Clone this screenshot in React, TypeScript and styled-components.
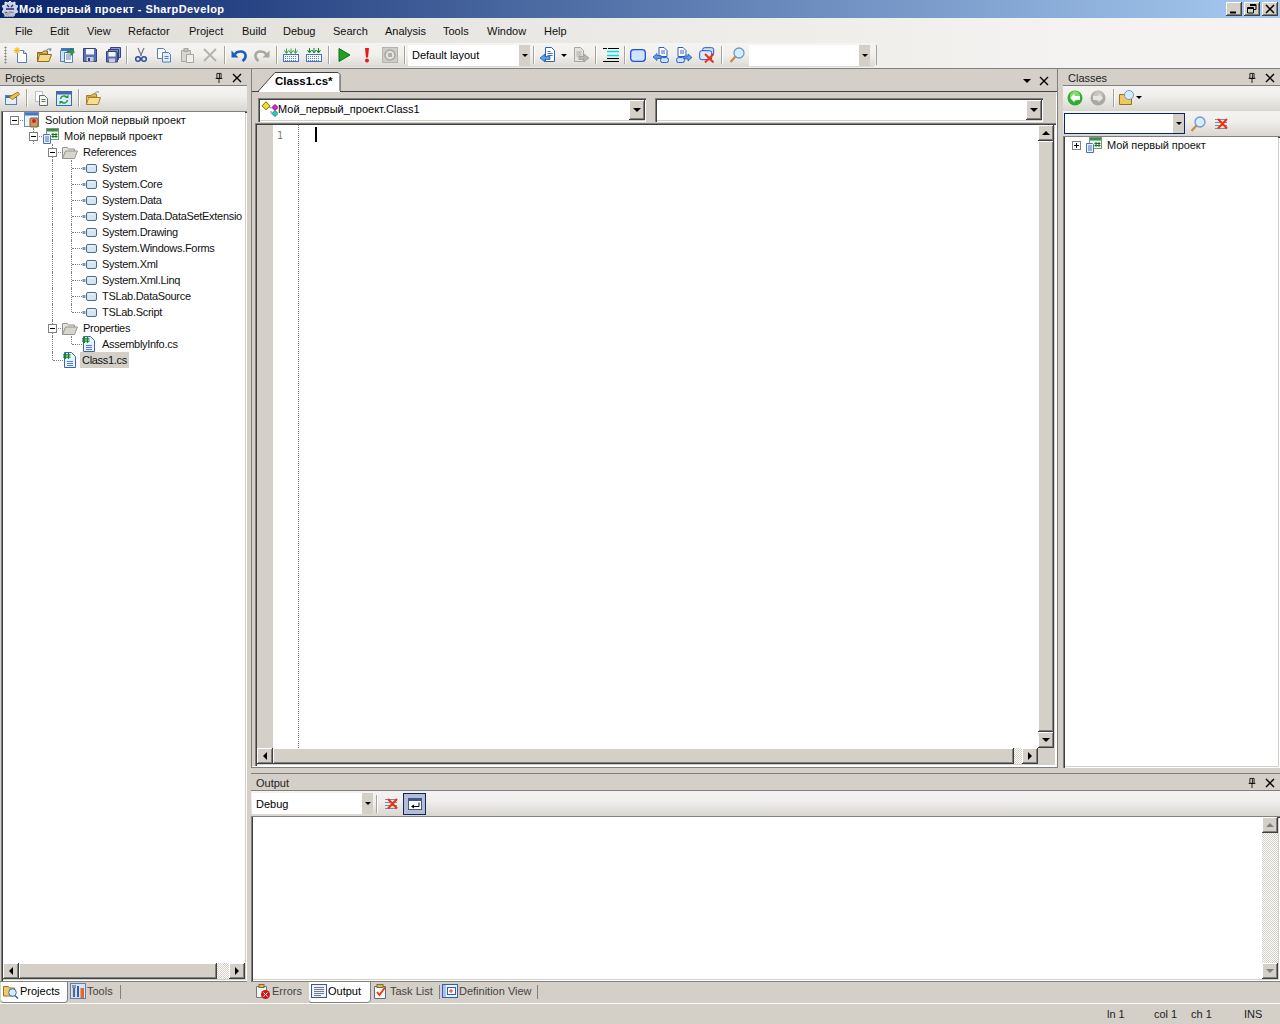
import React from "react";
import styled, { createGlobalStyle } from "styled-components";

const UI_FONT = `"Liberation Sans", Arial, sans-serif`;

const GlobalStyle = createGlobalStyle`
  html, body {
    margin: 0;
    padding: 0;
    background: #d4d0c8;
    overflow: hidden;
  }
  * { box-sizing: border-box; }
  svg { display: block; flex: none; }
`;

const sunken = `
  box-shadow: inset 1px 1px #808080, inset 2px 2px #404040, inset -1px -1px #fff, inset -2px -2px #d4d0c8;
`;
const raised = `
  box-shadow: inset -1px -1px #404040, inset 1px 1px #fff, inset -2px -2px #808080;
`;
const dither = `
  background-color: #fff;
  background-image: conic-gradient(#d4d0c8 25%, transparent 0 50%, #d4d0c8 0 75%, transparent 0);
  background-size: 2px 2px;
`;

const Window = styled.div`
  width: 1280px;
  height: 1024px;
  display: flex;
  flex-direction: column;
  font-family: ${UI_FONT};
  font-size: 11px;
  color: #000;
  background: #d4d0c8;
`;

/* ---- title bar ---- */
const TitleBar = styled.div`
  height: 18px;
  display: flex;
  align-items: center;
  padding: 0 2px;
  gap: 1px;
  background: linear-gradient(90deg, #0a246a, #a6caf0);
`;
const TitleText = styled.div`
  flex: 1;
  color: #fff;
  font-weight: 700;
  font-size: 11px;
  letter-spacing: 0.42px;
`;
const CaptionButtons = styled.div`
  display: flex;
  gap: 2px;
`;
const CaptionButton = styled.div`
  width: 16px;
  height: 14px;
  background: #d4d0c8;
  ${raised}
  display: flex;
  align-items: center;
  justify-content: center;
`;

/* ---- menu + toolbar ---- */
const TopArea = styled.div`
  height: 51px;
  background: linear-gradient(90deg, #e0ded8, #f4f3f1 85%);
  border-bottom: 1px solid #808080;
  flex: none;
`;
const MenuBar = styled.div`
  height: 24px;
  display: flex;
  align-items: center;
  padding-left: 15px;
  padding-top: 1px;
`;
const MenuItem = styled.div<{ $w: number }>`
  width: ${(p) => p.$w}px;
  color: #111;
`;
const ToolStrip = styled.div`
  height: 24px;
  width: 875px;
  margin-top: 1px;
  display: flex;
  align-items: center;
  padding-left: 4px;
  border-radius: 0 3px 3px 0;
  background: linear-gradient(180deg, #f5f4f2, #f1f0ed 50%, #dcd9d2);
  position: relative;
`;
const Grip = styled.div`
  width: 3px;
  height: 18px;
  margin-right: 2px;
  background-image: radial-gradient(#8a8780 45%, transparent 50%);
  background-size: 3px 3px;
`;
const ToolButton = styled.div<{ $w?: number; $active?: boolean }>`
  width: ${(p) => p.$w ?? 23}px;
  height: 22px;
  flex: none;
  display: flex;
  align-items: center;
  justify-content: center;
  ${(p) => (p.$active ? "background: #b6bdd2; border: 1px solid #0a246a;" : "")}
`;
const ToolSep = styled.div<{ $w?: number }>`
  width: ${(p) => p.$w ?? 7}px;
  height: 18px;
  flex: none;
  display: flex;
  justify-content: center;
  &::before {
    content: "";
    width: 1px;
    height: 100%;
    background: #a6a39c;
    box-shadow: 1px 0 #fff;
  }
`;
const FlatCombo = styled.div<{ $w: number; $outlined?: boolean }>`
  width: ${(p) => p.$w}px;
  height: 21px;
  flex: none;
  background: #fff;
  display: flex;
  align-items: center;
  justify-content: space-between;
  ${(p) => (p.$outlined ? "border: 1px solid #0a246a;" : "")}
`;
const FlatComboText = styled.span`
  padding-left: 4px;
`;
const FlatComboArrow = styled.div`
  width: 11px;
  align-self: stretch;
  background: #d4d0c8;
  display: flex;
  align-items: center;
  justify-content: center;
`;
const DownCaret = styled.div<{ $s?: number; $c?: string }>`
  width: 0;
  height: 0;
  border-left: ${(p) => p.$s ?? 3}px solid transparent;
  border-right: ${(p) => p.$s ?? 3}px solid transparent;
  border-top: ${(p) => p.$s ?? 3}px solid ${(p) => p.$c ?? "#000"};
`;
const StripEnd = styled.div`
  position: absolute;
  right: -2px;
  top: 2px;
  width: 1px;
  height: 20px;
  background: #a6a39c;
`;

/* ---- workspace ---- */
const Workspace = styled.div`
  flex: 1;
  display: flex;
  min-height: 0;
`;
const LeftColumn = styled.div`
  width: 247px;
  margin-right: 4px;
  display: flex;
  flex-direction: column;
`;
const RightColumn = styled.div`
  flex: 1;
  display: flex;
  flex-direction: column;
  min-width: 0;
`;
const TopRow = styled.div`
  height: 699px;
  display: flex;
  gap: 5px;
  margin-bottom: 5px;
`;
const Pad = styled.div<{ $w?: number; $h?: number }>`
  display: flex;
  flex-direction: column;
  min-height: 0;
  ${(p) => (p.$w ? `flex: 0 0 ${p.$w}px;` : "")}
  ${(p) => (p.$h ? `height: ${p.$h}px; border-top: 1px solid #808080;` : "")}
  ${(p) => (!p.$w && !p.$h ? "flex: 1;" : "")}
`;
const PadTitle = styled.div`
  height: 17px;
  flex: none;
  display: flex;
  align-items: center;
  padding: 1px 0 0 5px;
  border-bottom: 1px solid #808080;
  color: #222;
  background: #d4d0c8;
`;
const PadName = styled.span`
  flex: 1;
`;
const PadActions = styled.div`
  display: flex;
  align-items: center;
  gap: 8px;
  padding-right: 5px;
`;
const GradientBar = styled.div<{ $h: number; $pad?: number; $gap?: number; $lift?: number }>`
  height: ${(p) => p.$h}px;
  flex: none;
  display: flex;
  align-items: center;
  padding: 0 0 ${(p) => p.$lift ?? 0}px ${(p) => p.$pad ?? 0}px;
  gap: ${(p) => p.$gap ?? 0}px;
  background: linear-gradient(180deg, #f4f3f1, #f0efec 40%, #d9d6cf);
`;
const SunkenBox = styled.div<{ $ml?: number }>`
  flex: 1;
  min-height: 0;
  position: relative;
  background: #fff;
  padding: 1px 2px 2px 2px;
  margin-left: ${(p) => p.$ml ?? 0}px;
  display: flex;
  flex-direction: column;
  ${sunken}
`;
const TreeArea = styled.div`
  flex: 1;
  min-height: 0;
  padding: 0 0 0 2px;
  overflow: hidden;
  background: #fff;
`;

/* ---- tree ---- */
type CellKind = "empty" | "line" | "tee" | "corner" | "box" | "box-stem";

const TreeRow = styled.div`
  height: 16px;
  display: flex;
  align-items: center;
  white-space: nowrap;
`;
const TreeCell = styled.div<{ $kind: CellKind }>`
  width: 19px;
  height: 16px;
  flex: none;
  position: relative;
  display: flex;
  align-items: center;
  justify-content: center;
  ${(p) =>
    ["line", "tee", "box-stem"].includes(p.$kind)
      ? `&::before { content: ""; position: absolute; left: 9px; top: 0; bottom: 0; border-left: 1px dotted #808080; }`
      : ""}
  ${(p) =>
    p.$kind === "corner"
      ? `&::before { content: ""; position: absolute; left: 9px; top: 0; height: 8px; border-left: 1px dotted #808080; }`
      : ""}
  ${(p) =>
    ["tee", "corner", "box", "box-stem"].includes(p.$kind)
      ? `&::after { content: ""; position: absolute; left: 10px; right: -1px; top: 8px; border-top: 1px dotted #808080; }`
      : ""}
`;
const Expander = styled.div`
  width: 9px;
  height: 9px;
  position: relative;
  z-index: 1;
  background: #fff;
  border: 1px solid #808080;
  &::before {
    content: "";
    position: absolute;
    left: 1px;
    top: 3px;
    width: 5px;
    height: 1px;
    background: #000;
  }
`;
const PlusExpander = styled(Expander)`
  &::after {
    content: "";
    position: absolute;
    left: 3px;
    top: 1px;
    width: 1px;
    height: 5px;
    background: #000;
  }
`;
const NodeLabel = styled.span<{ $selected?: boolean; $gap?: number; $tight?: boolean }>`
  margin-left: ${(p) => p.$gap ?? 3}px;
  padding: 0 2px;
  line-height: 16px;
  color: #111;
  letter-spacing: ${(p) => (p.$tight ? "-0.3px" : "-0.08px")};
  ${(p) => (p.$selected ? "background: #d4d0c8;" : "")}
`;

/* ---- scrollbars ---- */
const HScroll = styled.div`
  height: 16px;
  flex: none;
  display: flex;
  ${dither}
`;
const VScroll = styled.div`
  width: 16px;
  flex: none;
  display: flex;
  flex-direction: column;
  ${dither}
`;
const ScrollBtn = styled.div`
  width: 16px;
  height: 16px;
  flex: none;
  background: #d4d0c8;
  ${raised}
  display: flex;
  align-items: center;
  justify-content: center;
`;
const Thumb = styled.div`
  flex: 1;
  background: #d4d0c8;
  ${raised}
`;
const Spacer = styled.div`
  flex: 1;
`;
const TrackGap = styled.div<{ $size: number }>`
  flex: 0 0 ${(p) => p.$size}px;
`;
const ScrollCorner = styled.div`
  flex: 0 0 16px;
  background: #d4d0c8;
`;
const LeftCaret = styled.div`
  border-top: 4px solid transparent;
  border-bottom: 4px solid transparent;
  border-right: 4px solid #000;
`;
const RightCaret = styled.div`
  border-top: 4px solid transparent;
  border-bottom: 4px solid transparent;
  border-left: 4px solid #000;
`;
const UpCaret = styled.div<{ $c?: string }>`
  border-left: 4px solid transparent;
  border-right: 4px solid transparent;
  border-bottom: 4px solid ${(p) => p.$c ?? "#000"};
`;
const DownArrow = styled.div<{ $c?: string }>`
  border-left: 4px solid transparent;
  border-right: 4px solid transparent;
  border-top: 4px solid ${(p) => p.$c ?? "#000"};
`;

/* ---- document ---- */
const DocPane = styled.div`
  flex: 1;
  display: flex;
  flex-direction: column;
  min-width: 0;
  border-left: 1px solid #808080;
  border-right: 1px solid #808080;
  border-bottom: 1px solid #808080;
`;
const DocTabs = styled.div`
  height: 23px;
  flex: none;
  display: flex;
  align-items: flex-end;
  padding-left: 6px;
  border-bottom: 1px solid #404040;
  position: relative;
`;
const DocTab = styled.div`
  width: 83px;
  height: 20px;
  margin-bottom: -1px;
  position: relative;
  display: flex;
  align-items: center;
  padding: 0 0 2px 17px;
  font-weight: 700;
  font-size: 11.5px;
`;
const DocTabShape = styled.svg`
  position: absolute;
  left: 0;
  top: 0;
`;
const DocTabText = styled.span`
  position: relative;
`;
const DocActions = styled.div`
  position: absolute;
  right: 8px;
  top: 7px;
  display: flex;
  align-items: center;
  gap: 8px;
`;
const DocBody = styled.div`
  flex: 1;
  min-height: 0;
  display: flex;
  flex-direction: column;
  padding: 0 0 0 3px;
  border-right: 1px solid #fff;
  border-bottom: 1px solid #fff;
`;
const ComboRow = styled.div`
  height: 24px;
  margin-top: 6px;
  padding-left: 3px;
  display: flex;
  gap: 9px;
  flex: none;
`;
const ClassicCombo = styled.div`
  width: 388px;
  height: 24px;
  display: flex;
  align-items: center;
  background: #fff;
  padding: 2px 1px 2px 2px;
  ${sunken}
`;
const ComboValue = styled.div`
  flex: 1;
  display: flex;
  align-items: center;
  padding: 0 0 2px 1px;
`;
const ClassicArrow = styled.div`
  width: 16px;
  height: 20px;
  background: #d4d0c8;
  ${raised}
  display: flex;
  align-items: center;
  justify-content: center;
`;
const Editor = styled.div`
  flex: 1;
  min-height: 0;
  margin-top: 1px;
  background: #fff;
  padding: 2px 2px 0 2px;
  display: flex;
  flex-direction: column;
  ${sunken}
`;
const EditorMain = styled.div`
  flex: 1;
  min-height: 0;
  display: flex;
`;
const Gutter = styled.div`
  width: 16px;
  background: #d4d0c8;
  flex: none;
`;
const LineNumbers = styled.div`
  width: 26px;
  flex: none;
  border-right: 1px dotted #808080;
  color: #808080;
  padding: 5px 0 0 4px;
  font-family: "DejaVu Sans Mono", "Liberation Mono", monospace;
  font-size: 10px;
`;
const CodeArea = styled.div`
  flex: 1;
  padding: 2px 0 0 16px;
`;
const Caret = styled.div`
  width: 2px;
  height: 15px;
  background: #000;
`;
const HScrollInset = styled(HScroll)`
  margin-bottom: 2px;
`;

/* ---- classes / output ---- */
const RightSunken = styled(SunkenBox)`
  flex-direction: row;
`;
const OutputText = styled.div`
  flex: 1;
  background: #fff;
`;
const OutputScrollHolder = styled.div`
  flex: 1;
  display: flex;
  min-height: 0;
`;

/* ---- bottom tabs ---- */
const BottomTabs = styled.div`
  height: 22px;
  flex: none;
  display: flex;
  align-items: flex-start;
  border-top: 1px solid #808080;
  padding-left: 1px;
`;
const BottomTab = styled.div<{ $active?: boolean; $w: number; $pl?: number }>`
  width: ${(p) => p.$w}px;
  height: 20px;
  flex: none;
  display: flex;
  align-items: center;
  white-space: nowrap;
  padding: 0 0 2px ${(p) => p.$pl ?? 2}px;
  gap: 1px;
  color: ${(p) => (p.$active ? "#000" : "#444")};
  ${(p) =>
    p.$active
      ? "background: #fff; border-radius: 0 0 3px 3px; box-shadow: 1px 0 #808080, 0 1px #808080;"
      : ""}
`;
const TabDivider = styled.div`
  width: 1px;
  height: 14px;
  margin-top: 3px;
  flex: none;
  background: #808080;
`;
const TabGap = styled.div<{ $w: number }>`
  width: ${(p) => p.$w}px;
  flex: none;
`;

/* ---- status ---- */
const StatusBar = styled.div`
  height: 21px;
  flex: none;
  display: flex;
  align-items: center;
  justify-content: flex-end;
  border-top: 1px solid #fff;
  background: #d4d0c8;
  color: #222;
`;
const StatusCell = styled.div<{ $w: number }>`
  width: ${(p) => p.$w}px;
`;

/* ---- icons ---- */
const G: Record<string, React.ReactNode> = {
  app: (
    <>
      <path d="M8 0l2 2 3-1v3l3 1-2 3 2 3-3 1-1 3H3l-1-3-2-1 2-3-2-3 3-1V1l3 1z" fill="#c8cfe6" stroke="#fff" strokeWidth=".8" />
      <path d="M5 4l2 2M11 4L9 6M4 8h8" stroke="#20306a" strokeWidth="1.300" />
      <text x="1.500" y="15.500" fontSize="8" fontWeight="700" fontFamily="Liberation Sans" fill="#fff" stroke="#10204a" strokeWidth=".3">SD</text>
    </>
  ),
  new: (
    <>
      <path d="M4.500 3.500h6l3 3v9h-9z" fill="#fdfefe" stroke="#5a7fb8" />
      <path d="M10.500 3.500v3h3" fill="#dfe8f5" stroke="#5a7fb8" />
      <circle cx="4" cy="3.500" r="2.500" fill="#ffe060" />
      <path d="M4 0v7M0.500 3.500h7M1.500 1l5 5M6.500 1l-5 5" stroke="#f0b020" strokeWidth="0.800" />
    </>
  ),
  open: (
    <>
      <path d="M1.500 5.500h5l1-1.500h4v3h-10z" fill="#e8c060" stroke="#8a6a20" />
      <path d="M1.500 14.500l2-7h12l-2.500 7z" fill="#f6d98a" stroke="#8a6a20" />
      <path d="M1.500 14.500v-9" stroke="#8a6a20" />
      <path d="M10 3.500q2-2.500 4.500-1.500" fill="none" stroke="#6688aa" />
      <path d="M15.500 1l-.5 3-2.500-1z" fill="#6688aa" />
    </>
  ),
  reload: (
    <>
      <path d="M1.500 3.500h8v11h-8z" fill="#cfe0f4" stroke="#5a7fb8" />
      <path d="M5.500 5.500h8v10h-8z" fill="#fff" stroke="#5a7fb8" />
      <path d="M7 8h5M7 10h5M7 12h5" stroke="#5a7fb8" />
      <rect x="2" y="1" width="13" height="3" fill="#3c78b8" />
      <path d="M8 4.500h4v-3l3.500 3.500-3.500 3.500v-2.500h-4z" fill="#30a040" stroke="#1a6a28" strokeWidth=".6" />
    </>
  ),
  save: (
    <>
      <path d="M1.500 1.500h12l1 1v12h-13z" fill="#5a6fb4" stroke="#33437f" />
      <rect x="4" y="2" width="8" height="5.500" fill="#f4f4f8" />
      <rect x="4.500" y="10" width="7" height="4.500" fill="#c8cce0" />
      <rect x="6" y="11" width="2" height="3" fill="#33437f" />
    </>
  ),
  saveall: (
    <>
      <path d="M5.500 .5h10v10h-10z" fill="#8c9acb" stroke="#33437f" />
      <path d="M3.500 2.500h10v10h-10z" fill="#7284c2" stroke="#33437f" />
      <path d="M1.500 4.500h10l1 1v9.500h-11z" fill="#5a6fb4" stroke="#33437f" />
      <rect x="3.500" y="5" width="7" height="4.500" fill="#f4f4f8" />
      <rect x="4" y="11.500" width="6" height="3.500" fill="#c8cce0" />
    </>
  ),
  cut: (
    <>
      <path d="M5 1l3.500 8M11 1l-3.500 8" stroke="#6a7a90" strokeWidth="1.200" fill="none" />
      <circle cx="5" cy="12" r="2.300" fill="none" stroke="#2c4ca0" strokeWidth="1.500" />
      <circle cx="11" cy="12" r="2.300" fill="none" stroke="#2c4ca0" strokeWidth="1.500" />
    </>
  ),
  copy: (
    <>
      <path d="M1.500 1.500h6l2 2v8h-8z" fill="#fff" stroke="#5a7fb8" />
      <path d="M6.500 5.500h6l2 2v7.500h-8z" fill="#e6eefa" stroke="#5a7fb8" />
      <path d="M8.500 9.500h4M8.500 11.500h4" stroke="#5a7fb8" />
    </>
  ),
  paste: (
    <>
      <path d="M2.500 3.500h9v11h-9z" fill="#d8d6d0" stroke="#a8a6a0" />
      <rect x="5" y="1.500" width="4" height="3" fill="#c4c2bc" stroke="#a8a6a0" />
      <path d="M7.500 7.500h7v8h-7z" fill="#f0efec" stroke="#a8a6a0" />
    </>
  ),
  del: <path d="M2 2l12 12M14 2L2 14" stroke="#b4b2ac" strokeWidth="1.800" />,
  undo: (
    <>
      <path d="M3.500 8.500C5 3.500 13.500 3 14.500 8c.4 2.500-1 4.500-3 6" fill="none" stroke="#1b5cc0" strokeWidth="2.600" />
      <path d="M0.500 3.500v7h7z" fill="#1b5cc0" />
    </>
  ),
  redo: (
    <>
      <path d="M12.500 8.500C11 3.500 2.500 3 1.500 8c-.4 2.500 1 4.500 3 6" fill="none" stroke="#a8a6a0" strokeWidth="2.600" />
      <path d="M15.500 3.500v7h-7z" fill="#a8a6a0" />
    </>
  ),
  build: (
    <>
      <rect x=".5" y="7.500" width="15" height="7" fill="#f4f8ff" stroke="#4a70b8" />
      <path d="M2 9.500h12M2 11.500h12M2 13.500h12" stroke="#5a7fc8" strokeDasharray="1 1" />
      <path d="M3.500 1.500v4M1.500 3.500l2 3 2-3M8 1.500v4M6 3.500l2 3 2-3M12.500 1.500v4M10.500 3.500l2 3 2-3" fill="none" stroke="#30a040" />
    </>
  ),
  rebuild: (
    <>
      <rect x=".5" y="7.500" width="15" height="7" fill="#f4f8ff" stroke="#4a70b8" />
      <path d="M2 9.500h12M2 11.500h12M2 13.500h12" stroke="#5a7fc8" strokeDasharray="1 1" />
      <path d="M1 1h14v5H1z" fill="#e8f4e8" />
      <path d="M3.500 1v4M1.500 3l2 3 2-3M8 1v4M6 3l2 3 2-3M12.500 1v4M10.500 3l2 3 2-3" fill="none" stroke="#1c8030" />
    </>
  ),
  run: <path d="M3 1.500L14 8 3 14.500z" fill="#20a020" stroke="#0e6e1e" />,
  alert: (
    <>
      <path d="M6 1h4L9 10.500H7z" fill="#e81818" />
      <circle cx="8" cy="13.500" r="2" fill="#e81818" />
    </>
  ),
  stop: (
    <>
      <rect x=".5" y=".5" width="15" height="15" fill="#cfcdc7" stroke="#b4b2ac" />
      <circle cx="8" cy="8" r="5" fill="#e6e4df" stroke="#a8a6a0" strokeWidth="1.500" />
      <rect x="6" y="6" width="4" height="4" fill="#b0aea8" />
    </>
  ),
  navback: (
    <>
      <path d="M5.500 .5h6l3 3v11h-9z" fill="#fff" stroke="#2f5fb0" />
      <path d="M7.500 4.500h3M7.500 6.500h5M7.500 8.500h5" stroke="#2f6fd0" />
      <path d="M0 11l5-4v2.500h5v3H5V15z" fill="#5a9ae8" stroke="#1f4fa0" strokeWidth=".7" />
    </>
  ),
  navfwd: (
    <>
      <path d="M1.500 .5h6l3 3v11h-9z" fill="#e4e3df" stroke="#a8a6a0" />
      <path d="M3.500 5h5M3.500 7h5M3.500 9h5" stroke="#a8a6a0" />
      <path d="M16 11l-5-4v2.500H6v3h5V15z" fill="#b8b6b0" stroke="#9a9892" strokeWidth=".7" />
    </>
  ),
  indent: (
    <>
      <path d="M0 1.500h4M5 1.500h11M0 14.500h16" stroke="#000" />
      <path d="M4 4.500h12M4 8.500h12" stroke="#00e0e0" strokeWidth="1.300" />
      <path d="M4 11.500h12" stroke="#000" />
    </>
  ),
  bubble: <rect x=".7" y="2.700" width="14.600" height="11.600" rx="3" fill="#cfe4fb" stroke="#1f4fe0" strokeWidth="1.300" />,
  bubbleback: (
    <>
      <path d="M6 .5h5l3 3v6H6z" fill="#fff" stroke="#2f5fb0" />
      <path d="M8 4h4M8 6h4" stroke="#2f6fd0" />
      <path d="M0 10l4-3.500v2h4v3H4v2z" fill="#5a9ae8" stroke="#1f4fa0" strokeWidth=".7" />
      <rect x="7.600" y="10.600" width="7.800" height="5" rx="2" fill="#cfe4fb" stroke="#1f4fe0" />
    </>
  ),
  bubblefwd: (
    <>
      <path d="M2 .5h5l3 3v6H2z" fill="#fff" stroke="#2f5fb0" />
      <path d="M4 4h4M4 6h4" stroke="#2f6fd0" />
      <rect x=".6" y="10.600" width="7.800" height="5" rx="2" fill="#cfe4fb" stroke="#1f4fe0" />
      <path d="M16 10.500l-4-3.500v2H8v3h4v2z" fill="#5a9ae8" stroke="#1f4fa0" strokeWidth=".7" />
    </>
  ),
  bubbledel: (
    <>
      <rect x="3.700" y=".7" width="11" height="8" rx="2" fill="#cfe4fb" stroke="#1f4fe0" />
      <rect x=".7" y="3.700" width="12" height="9" rx="2" fill="#dcebfc" stroke="#1f4fe0" />
      <path d="M6 7l8.500 8.500M14.500 7L6 15.500" stroke="#f03010" strokeWidth="2" />
    </>
  ),
  find: (
    <>
      <circle cx="10" cy="6" r="5" fill="#d8ecff" stroke="#6c9ad0" strokeWidth="1.300" />
      <path d="M6.500 9.500L1.500 15" stroke="#c88a40" strokeWidth="2.200" />
    </>
  ),
  projProps: (
    <>
      <rect x="1.500" y="5.500" width="11" height="9" fill="#e8eef8" stroke="#5a7fb8" />
      <rect x="2" y="6" width="10" height="2" fill="#3c6cb0" />
      <path d="M5 7l9-5 1.500 2.500-7 5z" fill="#f0c040" stroke="#8a6a20" strokeWidth=".8" />
    </>
  ),
  showAll: (
    <>
      <path d="M2.500 1.500h7v10h-7z" fill="#fff" stroke="#888" strokeDasharray="1 1" />
      <path d="M6.500 5.500h5l3 3v7h-8z" fill="#fbf6df" stroke="#5a6a8a" />
      <path d="M8.500 9.500h4M8.500 11.500h4" stroke="#5a6a8a" />
    </>
  ),
  refresh: (
    <>
      <rect x=".5" y="1.500" width="15" height="14" fill="#dcebfa" stroke="#3c6cb0" />
      <rect x="1" y="2" width="14" height="2.500" fill="#3c6cb0" />
      <path d="M4.500 9a3.500 3.500 0 0 1 6-2M11.500 10a3.500 3.500 0 0 1-6 2" fill="none" stroke="#1f9a30" strokeWidth="1.500" />
      <path d="M9 8h3.500V4.500zM7 11H3.500v3.500z" fill="#1f9a30" />
    </>
  ),
  openFolder: (
    <>
      <path d="M1.500 5.500h5l1-1.500h4v3h-10z" fill="#e8c060" stroke="#a88020" />
      <path d="M1.500 14.500l2-7h12l-2.500 7z" fill="#f8dd90" stroke="#a88020" />
      <path d="M1.500 14.500v-9" stroke="#a88020" />
      <path d="M9 4q2.500-3 5-2" fill="none" stroke="#7090a8" />
    </>
  ),
  solution: (
    <>
      <rect x=".5" y=".5" width="14" height="14" fill="#eef4fc" stroke="#6a8cc0" />
      <rect x="1" y="1" width="13" height="2.500" fill="#3c78c8" />
      <rect x="6" y="6" width="8" height="9" rx="1" fill="#c89a60" stroke="#8a5a30" />
      <circle cx="10" cy="9" r="2" fill="#d02030" />
    </>
  ),
  project: (
    <>
      <rect x="3.500" y=".5" width="12" height="11" fill="#f4f8e8" stroke="#7a9a70" />
      <rect x="4" y="1" width="11" height="2.500" fill="#3a8a50" />
      <path d="M10 5v5M13 5v5M8.500 6.500h6M8.500 8.500h6" stroke="#107030" />
      <path d="M.5 6.500h6l1 1v8h-7z" fill="#eaf2ff" stroke="#4a70b8" />
      <path d="M2 9h4M2 11h4M2 13h4" stroke="#4a70b8" />
    </>
  ),
  folderOpen: (
    <>
      <path d="M.5 14.500v-11h5l1 1.500h6v2.500" fill="#e6e4de" stroke="#96948e" />
      <path d="M.5 14.500l3-7.500h12l-3 7.500z" fill="#d8d6d0" stroke="#96948e" />
    </>
  ),
  reference: (
    <>
      <rect x="1.500" y="7" width="3" height="3" fill="#7c96bc" />
      <rect x="5.500" y="4.500" width="10" height="8" rx="1.500" fill="#d6e4f4" stroke="#4c6a92" />
      <path d="M6.500 6h8" stroke="#f4f8fc" />
    </>
  ),
  csFile: (
    <>
      <path d="M2.500 .5h7l4 4v11h-11z" fill="#eaf2ff" stroke="#3c64b0" />
      <path d="M5 9.500h6M5 11.500h6M5 13.500h6" stroke="#4a80d8" />
      <path d="M3.500 1v6M6.500 1v6M1 2.800h7.500M1 5.200h7.500" stroke="#0e8a20" strokeWidth="1.200" />
    </>
  ),
  pin: (
    <>
      <path d="M3.500 1.500h5v6h-5z" fill="none" stroke="#000" />
      <path d="M6.500 2v5M2 7.500h8M6 8v5" stroke="#000" />
    </>
  ),
  close: <path d="M1 1l8 8M9 1L1 9" stroke="#000" strokeWidth="1.400" />,
  back: (
    <>
      <circle cx="8" cy="8" r="7.500" fill="#2eae2e" />
      <circle cx="8" cy="6" r="5" fill="#7fda6e" />
      <path d="M3 8l4.500-4.500v2.500H13v4H7.500v2.500z" fill="#fff" />
    </>
  ),
  forward: (
    <>
      <circle cx="8" cy="8" r="7.500" fill="#aaa8a2" />
      <circle cx="8" cy="6" r="5" fill="#c6c4be" />
      <path d="M13 8L8.500 3.500V6H3v4h5.500v2.500z" fill="#e8e6e1" />
    </>
  ),
  folderSearch: (
    <>
      <path d="M.5 14.500v-10h5l1 1.500h6v8.500z" fill="#f0c860" stroke="#96741e" />
      <circle cx="10" cy="5" r="4.500" fill="#d8ecff" stroke="#6c9ad0" />
    </>
  ),
  clearFilter: (
    <>
      <path d="M1 3.500h12M1 6.500h12M1 9.500h12M1 12.500h12" stroke="#7a8aa8" />
      <path d="M4 3l9 9.500M13 3l-9 9.500" stroke="#f03010" strokeWidth="2" />
    </>
  ),
  wrap: (
    <>
      <rect x="1.500" y="2.500" width="13" height="11" fill="#fff" stroke="#3c5a90" />
      <rect x="2" y="3" width="12" height="2" fill="#3c5a90" />
      <path d="M12 6.500v4H6" fill="none" stroke="#000" />
      <path d="M7 8.500l-3 2 3 2z" fill="#000" />
    </>
  ),
  errors: (
    <>
      <path d="M1.500 3.500h10v11h-10z" fill="#f6f4ec" stroke="#6a7a90" />
      <rect x="4" y="1.500" width="5" height="3" fill="#d8b860" stroke="#8a6a20" />
      <circle cx="10.500" cy="11.500" r="4.500" fill="#d01818" />
      <path d="M8.500 9.500l4 4M12.500 9.500l-4 4" stroke="#fff" />
    </>
  ),
  output: (
    <>
      <rect x=".5" y="1.500" width="15" height="13" fill="#eef3fb" stroke="#3c5a90" />
      <path d="M3 4.500h10M3 6.500h10M3 8.500h10M3 10.500h10M3 12.500h7" stroke="#6a7a98" />
    </>
  ),
  tasks: (
    <>
      <path d="M1.500 3.500h11v12h-11z" fill="#fbf9ef" stroke="#5a6a8a" />
      <rect x="4" y="1.500" width="6" height="3" fill="#d8b860" stroke="#8a6a20" />
      <path d="M4 9l2.500 3L12 4.500" fill="none" stroke="#e03818" strokeWidth="1.800" />
    </>
  ),
  definition: (
    <>
      <rect x=".5" y="1.500" width="15" height="13" fill="#eef3fb" stroke="#2f5fb0" />
      <rect x="1" y="2" width="3" height="12" fill="#a8c4ec" />
      <rect x="5.500" y="4.500" width="8" height="7" fill="#fff" stroke="#2f5fb0" />
      <path d="M7 8h4M9 6v4" stroke="#e03818" />
    </>
  ),
  tools: (
    <>
      <rect x=".5" y=".5" width="15" height="15" fill="#d8e4f4" stroke="#5a7fb8" />
      <path d="M4 2v12" stroke="#5a6a7a" strokeWidth="2.200" />
      <path d="M8 3v11" stroke="#2f5fb0" strokeWidth="2" />
      <rect x="10.500" y="5" width="3.500" height="10" fill="#e86820" />
      <path d="M2 2h4v3H2z" fill="#8a9aaa" />
    </>
  ),
  projectsTab: (
    <>
      <path d="M.5 3.500h5l1 1.500h5v8h-11z" fill="#f0cc68" stroke="#96741e" />
      <circle cx="9.500" cy="9.500" r="3.800" fill="#d8ecff" stroke="#3c6cb0" />
      <path d="M12 12.500l3 3" stroke="#3c6cb0" strokeWidth="1.600" />
    </>
  ),
  classNode: (
    <>
      <path d="M5 .8L9 4.800 5 8.800 1 4.800z" fill="#f0e020" stroke="#6a6a10" />
      <path d="M14 3.500l3 3-3 3-3-3z" fill="#e020d0" stroke="#801080" />
      <path d="M14 9.500l3 3-3 3-3-3z" fill="#20d0d0" stroke="#108080" />
      <path d="M8 6l2.500 1M10 10v2l1.500 1" fill="none" stroke="#889" />
    </>
  ),
};

const Ico = ({ n, s = 16, vb = "0 0 16 16" }: { n: string; s?: number; vb?: string }) => (
  <svg width={s} height={s} viewBox={vb}>
    {G[n]}
  </svg>
);

const Pin = () => (
  <svg width="10" height="14" viewBox="0 0 12 14">
    {G.pin}
  </svg>
);
const CloseX = () => (
  <svg width="10" height="10" viewBox="0 0 10 10">
    {G.close}
  </svg>
);

/* ---- data ---- */
const menus: [string, number][] = [
  ["File", 35],
  ["Edit", 37],
  ["View", 41],
  ["Refactor", 61],
  ["Project", 53],
  ["Build", 41],
  ["Debug", 50],
  ["Search", 52],
  ["Analysis", 58],
  ["Tools", 44],
  ["Window", 57],
  ["Help", 40],
];

type TreeItem = { label: string; icon: string; cells: CellKind[]; toggle?: boolean; selected?: boolean; gap?: number };

const refs = [
  "System",
  "System.Core",
  "System.Data",
  "System.Data.DataSetExtensio",
  "System.Drawing",
  "System.Windows.Forms",
  "System.Xml",
  "System.Xml.Linq",
  "TSLab.DataSource",
  "TSLab.Script",
];

const nodes: TreeItem[] = [
  { label: "Solution Мой первый проект", icon: "solution", cells: ["box"], toggle: true },
  { label: "Мой первый проект", icon: "project", cells: ["empty", "box-stem"], toggle: true },
  { label: "References", icon: "folderOpen", cells: ["empty", "empty", "box-stem"], toggle: true },
  ...refs.map(
    (label, i): TreeItem => ({
      label,
      icon: "reference",
      cells: ["empty", "empty", "line", i === refs.length - 1 ? "corner" : "tee"],
    })
  ),
  { label: "Properties", icon: "folderOpen", cells: ["empty", "empty", "box-stem"], toggle: true },
  { label: "AssemblyInfo.cs", icon: "csFile", cells: ["empty", "empty", "line", "corner"] },
  { label: "Class1.cs", icon: "csFile", cells: ["empty", "empty", "corner"], selected: true, gap: 2 },
];

const isLatin = (s: string) => /^[\x20-\x7e]+$/.test(s);

const TreeNode = ({ node }: { node: TreeItem }) => (
  <TreeRow>
    {node.cells.map((kind, i) => (
      <TreeCell key={i} $kind={kind}>
        {node.toggle && i === node.cells.length - 1 && <Expander />}
      </TreeCell>
    ))}
    <Ico n={node.icon} />
    <NodeLabel $selected={node.selected} $gap={node.gap} $tight={isLatin(node.label)}>
      {node.label}
    </NodeLabel>
  </TreeRow>
);

const PadHeader = ({ name }: { name: string }) => (
  <PadTitle>
    <PadName>{name}</PadName>
    <PadActions>
      <Pin />
      <CloseX />
    </PadActions>
  </PadTitle>
);

export default function App() {
  return (
    <Window>
      <GlobalStyle />
      <TitleBar>
        <Ico n="app" />
        <TitleText>Мой первый проект - SharpDevelop</TitleText>
        <CaptionButtons>
          <CaptionButton>
            <svg width="10" height="10" viewBox="0 0 10 10">
              <path d="M1 8.500h6" stroke="#000" strokeWidth="2" />
            </svg>
          </CaptionButton>
          <CaptionButton>
            <svg width="10" height="10" viewBox="0 0 10 10">
              <path d="M3 .5h6v5H7M3 1.500h6M.5 3.500h6v5.500h-6zM.5 4.500h6" fill="none" stroke="#000" />
            </svg>
          </CaptionButton>
          <CaptionButton>
            <svg width="10" height="10" viewBox="0 0 10 10">
              <path d="M1 1l8 8M9 1L1 9" stroke="#000" strokeWidth="1.500" />
            </svg>
          </CaptionButton>
        </CaptionButtons>
      </TitleBar>

      <TopArea>
        <MenuBar>
          {menus.map(([m, w]) => (
            <MenuItem key={m} $w={w}>
              {m}
            </MenuItem>
          ))}
        </MenuBar>
        <ToolStrip>
          <Grip />
          <ToolButton><Ico n="new" /></ToolButton>
          <ToolButton><Ico n="open" /></ToolButton>
          <ToolButton><Ico n="reload" /></ToolButton>
          <ToolButton><Ico n="save" /></ToolButton>
          <ToolButton><Ico n="saveall" /></ToolButton>
          <ToolSep $w={5} />
          <ToolButton><Ico n="cut" /></ToolButton>
          <ToolButton><Ico n="copy" /></ToolButton>
          <ToolButton><Ico n="paste" /></ToolButton>
          <ToolButton><Ico n="del" /></ToolButton>
          <ToolSep $w={6} />
          <ToolButton><Ico n="undo" /></ToolButton>
          <ToolButton><Ico n="redo" /></ToolButton>
          <ToolSep $w={6} />
          <ToolButton><Ico n="build" /></ToolButton>
          <ToolButton><Ico n="rebuild" /></ToolButton>
          <ToolSep />
          <ToolButton><Ico n="run" /></ToolButton>
          <ToolButton><Ico n="alert" /></ToolButton>
          <ToolButton><Ico n="stop" /></ToolButton>
          <ToolSep />
          <FlatCombo $w={122}>
            <FlatComboText>Default layout</FlatComboText>
            <FlatComboArrow><DownCaret /></FlatComboArrow>
          </FlatCombo>
          <ToolSep $w={6} />
          <ToolButton><Ico n="navback" /></ToolButton>
          <ToolButton $w={10}><DownCaret /></ToolButton>
          <ToolButton><Ico n="navfwd" /></ToolButton>
          <ToolSep />
          <ToolButton><Ico n="indent" /></ToolButton>
          <ToolSep $w={4} />
          <ToolButton><Ico n="bubble" /></ToolButton>
          <ToolButton><Ico n="bubbleback" /></ToolButton>
          <ToolButton><Ico n="bubblefwd" /></ToolButton>
          <ToolButton><Ico n="bubbledel" /></ToolButton>
          <ToolSep $w={6} />
          <ToolButton $w={25}><Ico n="find" /></ToolButton>
          <FlatCombo $w={121}>
            <span />
            <FlatComboArrow><DownCaret /></FlatComboArrow>
          </FlatCombo>
          <StripEnd />
        </ToolStrip>
      </TopArea>

      <Workspace>
        <LeftColumn>
          <Pad>
            <PadHeader name="Projects" />
            <GradientBar $h={25} $lift={2}>
              <ToolButton><Ico n="projProps" /></ToolButton>
              <ToolSep $w={6} />
              <ToolButton><Ico n="showAll" /></ToolButton>
              <ToolButton><Ico n="refresh" /></ToolButton>
              <ToolSep $w={6} />
              <ToolButton><Ico n="openFolder" /></ToolButton>
            </GradientBar>
            <SunkenBox $ml={1}>
              <TreeArea>
                {nodes.map((node) => (
                  <TreeNode key={node.label} node={node} />
                ))}
              </TreeArea>
              <HScroll>
                <ScrollBtn><LeftCaret /></ScrollBtn>
                <Thumb />
                <TrackGap $size={12} />
                <ScrollBtn><RightCaret /></ScrollBtn>
              </HScroll>
            </SunkenBox>
          </Pad>
          <BottomTabs>
            <BottomTab $active $w={66}>
              <Ico n="projectsTab" />
              Projects
            </BottomTab>
            <BottomTab $w={53} $pl={3}>
              <Ico n="tools" />
              Tools
            </BottomTab>
            <TabDivider />
          </BottomTabs>
        </LeftColumn>

        <RightColumn>
          <TopRow>
            <DocPane>
              <DocTabs>
                <DocTab>
                  <DocTabShape width="83" height="20" viewBox="0 0 83 20">
                    <path d="M0 19.500L17 .5H80l2 2v17z" fill="#fff" stroke="#404040" />
                    <path d="M1 20h81" stroke="#fff" strokeWidth="2" />
                  </DocTabShape>
                  <DocTabText>Class1.cs*</DocTabText>
                </DocTab>
                <DocActions>
                  <DownCaret $s={4} />
                  <CloseX />
                </DocActions>
              </DocTabs>
              <DocBody>
                <ComboRow>
                  <ClassicCombo>
                    <ComboValue>
                      <Ico n="classNode" s={17} vb="0 0 17 17" />
                      Мой_первый_проект.Class1
                    </ComboValue>
                    <ClassicArrow><DownArrow /></ClassicArrow>
                  </ClassicCombo>
                  <ClassicCombo>
                    <ComboValue />
                    <ClassicArrow><DownArrow /></ClassicArrow>
                  </ClassicCombo>
                </ComboRow>
                <Editor>
                  <EditorMain>
                    <Gutter />
                    <LineNumbers>1</LineNumbers>
                    <CodeArea><Caret /></CodeArea>
                    <VScroll>
                      <ScrollBtn><UpCaret /></ScrollBtn>
                      <Thumb />
                      <ScrollBtn><DownArrow /></ScrollBtn>
                    </VScroll>
                  </EditorMain>
                  <HScrollInset>
                    <ScrollBtn><LeftCaret /></ScrollBtn>
                    <Thumb />
                    <TrackGap $size={8} />
                    <ScrollBtn><RightCaret /></ScrollBtn>
                    <ScrollCorner />
                  </HScrollInset>
                </Editor>
              </DocBody>
            </DocPane>

            <Pad $w={217}>
              <PadHeader name="Classes" />
              <GradientBar $h={25} $lift={2}>
                <ToolButton><Ico n="back" /></ToolButton>
                <ToolButton><Ico n="forward" /></ToolButton>
                <ToolSep $w={9} />
                <ToolButton $w={18}><Ico n="folderSearch" /></ToolButton>
                <DownCaret />
              </GradientBar>
              <GradientBar $h={25} $pad={1} $gap={1}>
                <FlatCombo $w={121} $outlined>
                  <span />
                  <FlatComboArrow><DownCaret /></FlatComboArrow>
                </FlatCombo>
                <ToolButton><Ico n="find" /></ToolButton>
                <ToolButton><Ico n="clearFilter" /></ToolButton>
              </GradientBar>
              <RightSunken>
                <TreeArea>
                  <TreeRow>
                    <TreeCell $kind="empty"><PlusExpander /></TreeCell>
                    <Ico n="project" />
                    <NodeLabel $gap={3}>Мой первый проект</NodeLabel>
                  </TreeRow>
                </TreeArea>
              </RightSunken>
            </Pad>
          </TopRow>

          <Pad $h={208}>
            <PadHeader name="Output" />
            <GradientBar $h={25} $pad={1}>
              <FlatCombo $w={121}>
                <FlatComboText>Debug</FlatComboText>
                <FlatComboArrow><DownCaret /></FlatComboArrow>
              </FlatCombo>
              <ToolSep />
              <ToolButton><Ico n="clearFilter" /></ToolButton>
              <ToolButton $active><Ico n="wrap" /></ToolButton>
            </GradientBar>
            <SunkenBox>
              <OutputScrollHolder>
                <OutputText />
                <VScroll>
                  <ScrollBtn><UpCaret $c="#808080" /></ScrollBtn>
                  <Spacer />
                  <ScrollBtn><DownArrow $c="#808080" /></ScrollBtn>
                </VScroll>
              </OutputScrollHolder>
            </SunkenBox>
          </Pad>
          <BottomTabs>
            <TabGap $w={1} />
            <BottomTab $w={56}>
              <Ico n="errors" />
              Errors
            </BottomTab>
            <BottomTab $active $w={61}>
              <Ico n="output" />
              Output
            </BottomTab>
            <BottomTab $w={69} $pl={3}>
              <Ico n="tasks" />
              Task List
            </BottomTab>
            <TabDivider />
            <BottomTab $w={97}>
              <Ico n="definition" />
              Definition View
            </BottomTab>
            <TabDivider />
          </BottomTabs>
        </RightColumn>
      </Workspace>

      <StatusBar>
        <StatusCell $w={47}>ln 1</StatusCell>
        <StatusCell $w={37}>col 1</StatusCell>
        <StatusCell $w={53}>ch 1</StatusCell>
        <StatusCell $w={36}>INS</StatusCell>
      </StatusBar>
    </Window>
  );
}
